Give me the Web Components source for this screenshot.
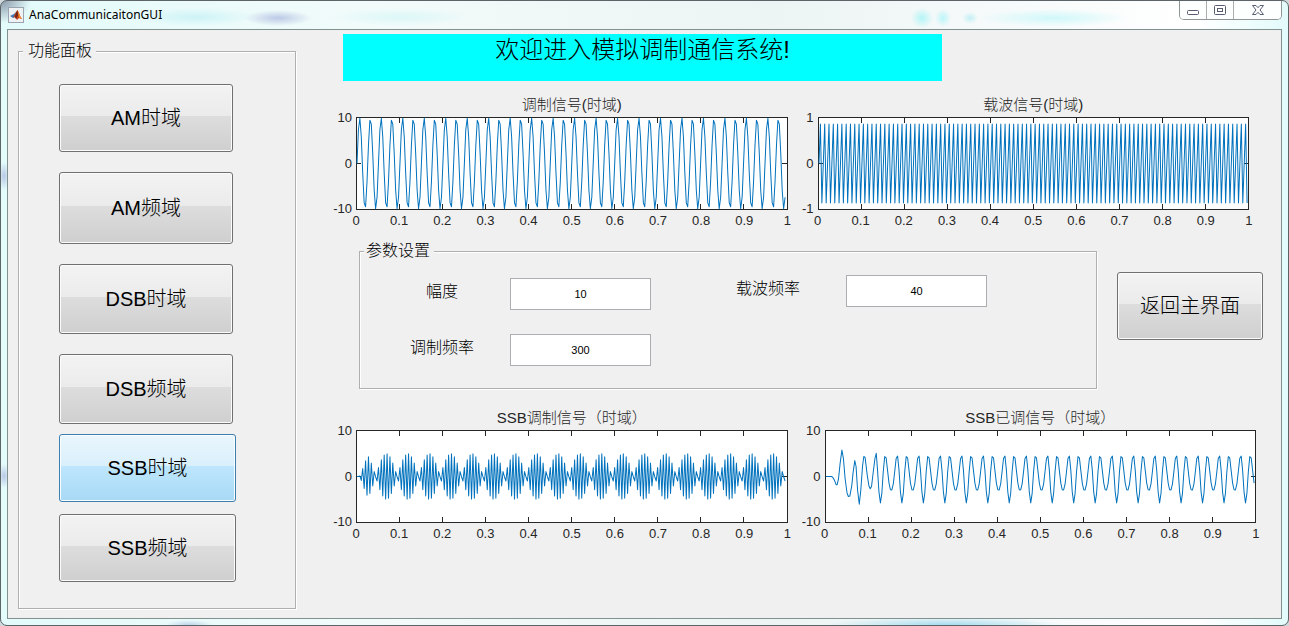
<!DOCTYPE html>
<html lang="zh-CN">
<head>
<meta charset="utf-8">
<title>AnaCommunicaitonGUI</title>
<style>
  html, body { margin: 0; background: #cfd8da; }
  body {
    font-family: "Liberation Sans", "Noto Sans CJK SC", sans-serif;
    font-weight: 300;
    color: #000;
    --face: #f0f0f0;
    --etch: #aeb0b0;
  }
</style>
</head>
<body>
<app-window heading="AnaCommunicaitonGUI">
  <group-panel slot="sidebar" class="side" heading="功能面板">
    <mode-list></mode-list>
  </group-panel>
  <welcome-banner slot="main">欢迎进入模拟调制通信系统!</welcome-banner>
  <plot-row slot="main">
    <signal-plot heading="调制信号(时域)" limit="10" signal="message"></signal-plot>
    <signal-plot heading="载波信号(时域)" limit="1" signal="carrier"></signal-plot>
  </plot-row>
  <settings-row slot="main"></settings-row>
  <plot-row slot="main" class="lower">
    <signal-plot heading="SSB调制信号（时域）" limit="10" signal="ssb"></signal-plot>
    <signal-plot heading="SSB已调信号（时域）" limit="10" signal="demod"></signal-plot>
  </plot-row>
</app-window>

<script>
class BaseElement extends HTMLElement {
  connectedCallback() {
    if (this.shadowRoot) return;
    this.attachShadow({ mode: "open" }).innerHTML = this.render();
  }
}

/* Window frame, title bar and client area */
class AppWindow extends BaseElement {
  render() {
    return `
    <style>
      :host {
        display: flex; flex-direction: column; box-sizing: border-box;
        min-height: 100vh; padding: 0 6px 6px;
        border: 1px solid #5c6468; border-radius: 7px;
        background:
          radial-gradient(ellipse 60px 9px at 195px 16px, #cdf3f6, transparent),
          radial-gradient(ellipse 34px 8px at 277px 17px, #bcc9e6, transparent),
          radial-gradient(ellipse 70px 9px at 400px 16px, #dcf7f8, transparent),
          radial-gradient(ellipse 11px 10px at 921px 17px, #b4f5f8, transparent),
          radial-gradient(ellipse 8px 9px at 942px 17px, #bcf6f9, transparent),
          radial-gradient(ellipse 8px 6px at 969px 17px, #c4f0f5, transparent),
          radial-gradient(ellipse 74px 9px at 1052px 17px, #d0f8fa, transparent),
          radial-gradient(ellipse 24px 5px at 188px 100%, #bcd4ea, transparent),
          radial-gradient(ellipse 120px 8px at 945px 100%, #a4dcee, transparent),
          radial-gradient(ellipse 6px 12px at 3px 475px, #b8c8e4, transparent),
          radial-gradient(ellipse 6px 14px at 3px 175px, #b8c8e4, transparent),
          radial-gradient(ellipse 30px 22px at 0 0, #8a9aab, transparent),
          linear-gradient(90deg, #e3fbfb, #f2fbfa 30%, #ecf4f4 60%, #ffffff 93%, #e2fbfb);
      }
      header { display: flex; height: 28px; align-items: flex-start; }
      .icon { width: 16px; height: 16px; margin: 6px 0 0 1px; }
      h1 {
        flex: 1; margin: 5px 0 0 5px;
        font: 400 12px/18px "Noto Sans", "Open Sans", sans-serif;
      }
      .controls {
        display: flex; box-sizing: border-box; height: 19px;
        border: 1px solid #8f9595; border-top: 0; border-radius: 0 0 5px 5px;
        overflow: hidden;
      }
      button {
        width: 27px; padding: 0; border: 0; border-right: 1px solid #a8adad;
        background: #fdffff; display: flex; align-items: center; justify-content: center;
      }
      button:last-child { width: 47px; border-right: 0; }
      .client {
        flex: 1; display: flex; gap: 32px; box-sizing: border-box; min-width: 0;
        border: 1px solid #819190; background: var(--face);
      }
      aside { width: 278px; margin: 11px 0 9px 10px; display: flex; }
      main { flex: 1; min-width: 0; padding-top: 4px; }
    </style>
    <header>
      <svg class="icon" viewBox="0 0 16 16" aria-hidden="true">
        <rect x=".5" y=".5" width="15" height="15" fill="#eef2f5" stroke="#9aa5b0"/>
        <path d="M2 9 6 7 8 5 7 10 5 11Z" fill="#3c78b4"/>
        <path d="M5 11 8 5 9.500 3 11 6 12 9 14 12 11 11 9 13 7 10Z" fill="#c8401c"/>
        <path d="M9.500 3 10 8 8 12 7 10 8 6Z" fill="#6c2418"/>
        <path d="M9.500 3 11 6 12 9 14 12 11 11Z" fill="#ee8a28"/>
      </svg>
      <h1>${this.getAttribute("heading")}</h1>
      <div class="controls">
        <button aria-label="最小化"><svg width="14" height="14" viewBox="0 0 14 14"><rect x="1.500" y="7.500" width="11" height="4" rx="1" fill="#fff" stroke="#565d70"/></svg></button>
        <button aria-label="最大化"><svg width="14" height="14" viewBox="0 0 14 14"><rect x="1.500" y="2.500" width="11" height="9" rx="1" fill="#fff" stroke="#565d70"/><rect x="4.500" y="5.500" width="5" height="3" fill="#fff" stroke="#565d70"/></svg></button>
        <button aria-label="关闭"><svg width="14" height="14" viewBox="0 0 14 14"><path d="M1.500 2.500H5L7 4.700 9 2.500H12.500L9 7 12.500 11.500H9L7 9.300 5 11.500H1.500L5 7Z" fill="#fff" stroke="#565d70"/></svg></button>
      </div>
    </header>
    <div class="client">
      <aside><slot name="sidebar"></slot></aside>
      <main><slot name="main"></slot></main>
    </div>`;
  }
}

/* Etched group box with a caption */
class GroupPanel extends BaseElement {
  render() {
    return `
    <style>
      :host { display: flex; flex: 1; min-width: 0; }
      fieldset {
        flex: 1; min-width: 0; margin: 0; padding: 0; box-sizing: border-box;
        border: 1px solid var(--etch);
        box-shadow: 1px 1px 0 #fff, inset 1px 1px 0 #fff;
      }
      legend {
        margin-left: 4px; padding: 0 4px 0 2px; font-size: 16px; line-height: 20px;
        background: var(--face);
      }
      :host(.side) legend { padding-left: 5px; }
    </style>
    <fieldset><legend>${this.getAttribute("heading")}</legend><slot></slot></fieldset>`;
  }
}

/* Glossy push button */
class PushButton extends BaseElement {
  render() {
    return `
    <style>
      :host { display: block; width: 174px; height: 70px; }
      :host([size="low"]) { height: 68px; }
      :host([size="tall"]) { height: 72px; }
      button {
        width: 100%; height: 100%; padding: 0 0 4px; font: inherit; font-size: 20px; color: #000;
        border: 1px solid #707070; border-radius: 3px;
        background: linear-gradient(#f3f3f3, #ebebeb 47%, #dddddd 47%, #cfcfcf);
        box-shadow: inset 0 0 0 1px #fcfcfc;
      }
      :host([active]) button {
        border-color: #3c7fb1;
        background: linear-gradient(#eaf6fd, #d9f0fc 47%, #bee6fd 47%, #a7d9f5);
      }
    </style>
    <button type="button"><slot></slot></button>`;
  }
}

class ModeList extends BaseElement {
  render() {
    return `
    <style>
      :host { display: block; padding: 23px 0 0 40px; }
      div { display: grid; gap: 20px; margin-bottom: 10px; }
      .ssb { gap: 12px; }
      .ssb push-button { width: 177px; }
    </style>
    <div>
      <push-button size="low">AM时域</push-button>
      <push-button size="tall">AM频域</push-button>
      <push-button>DSB时域</push-button>
      <push-button>DSB频域</push-button>
    </div>
    <div class="ssb">
      <push-button size="low" active>SSB时域</push-button>
      <push-button size="low">SSB频域</push-button>
    </div>`;
  }
}

class WelcomeBanner extends BaseElement {
  render() {
    return `
    <style>
      :host {
        display: block; height: 47px; margin: 0 339px 14px 15px;
        background: #00ffff; text-align: center; font-size: 24px; line-height: 32px;
      }
    </style><slot></slot>`;
  }
}

class PlotRow extends BaseElement {
  render() {
    return `
    <style>
      :host { display: flex; gap: 2px; padding-right: 32px; }
      :host(.lower) { gap: 9px; padding-right: 25px; margin-top: 19px; }
    </style><slot></slot>`;
  }
}

/* Sampled waveforms on t = 0..1 s, 300 samples per second */
const RATE = 300;
const sample = fn => Array.from({ length: RATE }, (_, n) => [n / RATE, fn(n / RATE, n)]);
const DEMOD_START = [
  [0, 0], [.013, 0], [.016, -.2], [.02, -.9], [.0235, -1.8], [.026, -1.8], [.029, -.6],
  [.033, 3], [.037, 5.8], [.0405, 4], [.0445, -.5], [.049, -3.6], [.052, -4.4],
  [.0555, -4.3], [.06, -2], [.063, .8], [.067, 3.5], [.07, 2.2], [.0735, -3],
  [.0775, -6.1], [.081, -3], [.085, 2.2], [.088, 4.4], [.091, 4.2], [.096, .3],
  [.1, -2.1], [.103, -2.7], [.106, -2.2], [.110, 1], [.114, 4], [.117, 5.1]
];
const SIGNALS = {
  message: () => sample(t => 10 * Math.sin(2 * Math.PI * 40 * t)),
  carrier: () => sample(t => Math.sin(2 * Math.PI * 100 * t)),
  ssb: () => sample((t, n) => {
    const rise = Math.min(1, Math.max(0, (t - .006) / .02));
    return 5 * rise * (n % 2 ? 1 : -1) * Math.sin(2 * Math.PI * 10 * (t - .0435));
  }),
  demod: () => DEMOD_START.concat(sample(t => {
    const a = 2 * Math.PI * 20 * (t - .0268);
    return -.23 * Math.cos(a) - 4.45 * Math.cos(2 * a) - 1.12 * Math.cos(3 * a);
  }).filter(([t]) => t > .118))
};

class SignalPlot extends BaseElement {
  render() {
    const limit = Number(this.getAttribute("limit"));
    const W = 1000, H = 200;
    const points = SIGNALS[this.getAttribute("signal")]()
      .map(([t, y]) => (t * W).toFixed(1) + "," + (H / 2 - y / limit * H / 2).toFixed(1)).join(" ");
    let ticks = `M0 ${H / 2}h10M${W} ${H / 2}h-10`;
    for (let i = 1; i < 10; i++) ticks += `M${i * 100} 0v10M${i * 100} ${H}v-10`;
    const xs = Array.from({ length: 11 }, (_, i) => `<span>${i / 10}</span>`).join("");
    return `
    <style>
      :host {
        flex: 1; min-width: 0; display: grid;
        grid-template: 20px 93px 18px / 28px minmax(0, 1fr);
        row-gap: 2px; color: #262626; font-size: 13px;
      }
      h2 {
        grid-column: 2; margin: 0; text-align: center;
        font-size: 15px; font-weight: inherit; line-height: 20px; white-space: nowrap;
      }
      .y {
        display: flex; flex-direction: column; justify-content: space-between;
        margin: -7px 4px -7px 0; text-align: right; line-height: 16px;
      }
      .box { border: 1px solid #262626; background: #fff; }
      svg { display: block; width: 100%; height: 100%; overflow: visible; }
      path, polyline { fill: none; vector-effect: non-scaling-stroke; }
      path { stroke: #262626; shape-rendering: crispEdges; }
      polyline { stroke: #0072bd; stroke-linejoin: round; }
      .x { grid-column: 2; display: flex; justify-content: space-between; line-height: 18px; }
      .x span { width: 0; display: flex; justify-content: center; }
    </style>
    <h2>${this.getAttribute("heading")}</h2>
    <div class="y"><span>${limit}</span><span>0</span><span>-${limit}</span></div>
    <div class="box">
      <svg viewBox="0 0 ${W} ${H}" preserveAspectRatio="none" aria-hidden="true">
        <path d="${ticks}"/><polyline points="${points}"/>
      </svg>
    </div>
    <div class="x">${xs}</div>`;
  }
}

/* One labelled value */
class ParamField extends BaseElement {
  render() {
    return `
    <style>
      :host { display: flex; align-items: center; }
      label {
        width: 150px; box-sizing: border-box; padding-left: 14px; align-self: flex-start;
        text-align: center; font-size: 16px; line-height: 28px;
      }
      :host(.far) label { width: 156px; padding-left: 0; }
      input {
        width: 141px; height: 32px; box-sizing: border-box; padding: 0;
        border: 1px solid #abadb3; border-radius: 0; background: #fff; color: #000;
        font-family: inherit; font-size: 11px; text-align: center;
      }
    </style>
    <label for="value">${this.getAttribute("label")}</label>
    <input id="value" type="text" value="${this.getAttribute("value")}">`;
  }
}

class SettingsRow extends BaseElement {
  render() {
    return `
    <style>
      :host { display: flex; gap: 20px; margin-top: 11px; padding: 0 18px 0 31px; }
      .fields { display: flex; gap: 39px; height: 127px; }
      .near { display: grid; gap: 24px; align-content: start; padding-top: 17px; }
      .second { padding-top: 14px; }
      .back { width: 146px; height: 68px; margin-top: 31px; }
    </style>
    <group-panel heading="参数设置">
      <div class="fields">
        <div class="near">
          <param-field label="幅度" value="10"></param-field>
          <param-field label="调制频率" value="300"></param-field>
        </div>
        <div class="second">
          <param-field class="far" label="载波频率" value="40"></param-field>
        </div>
      </div>
    </group-panel>
    <push-button class="back">返回主界面</push-button>`;
  }
}

customElements.define("push-button", PushButton);
customElements.define("group-panel", GroupPanel);
customElements.define("mode-list", ModeList);
customElements.define("welcome-banner", WelcomeBanner);
customElements.define("signal-plot", SignalPlot);
customElements.define("plot-row", PlotRow);
customElements.define("param-field", ParamField);
customElements.define("settings-row", SettingsRow);
customElements.define("app-window", AppWindow);
</script>
</body>
</html>
